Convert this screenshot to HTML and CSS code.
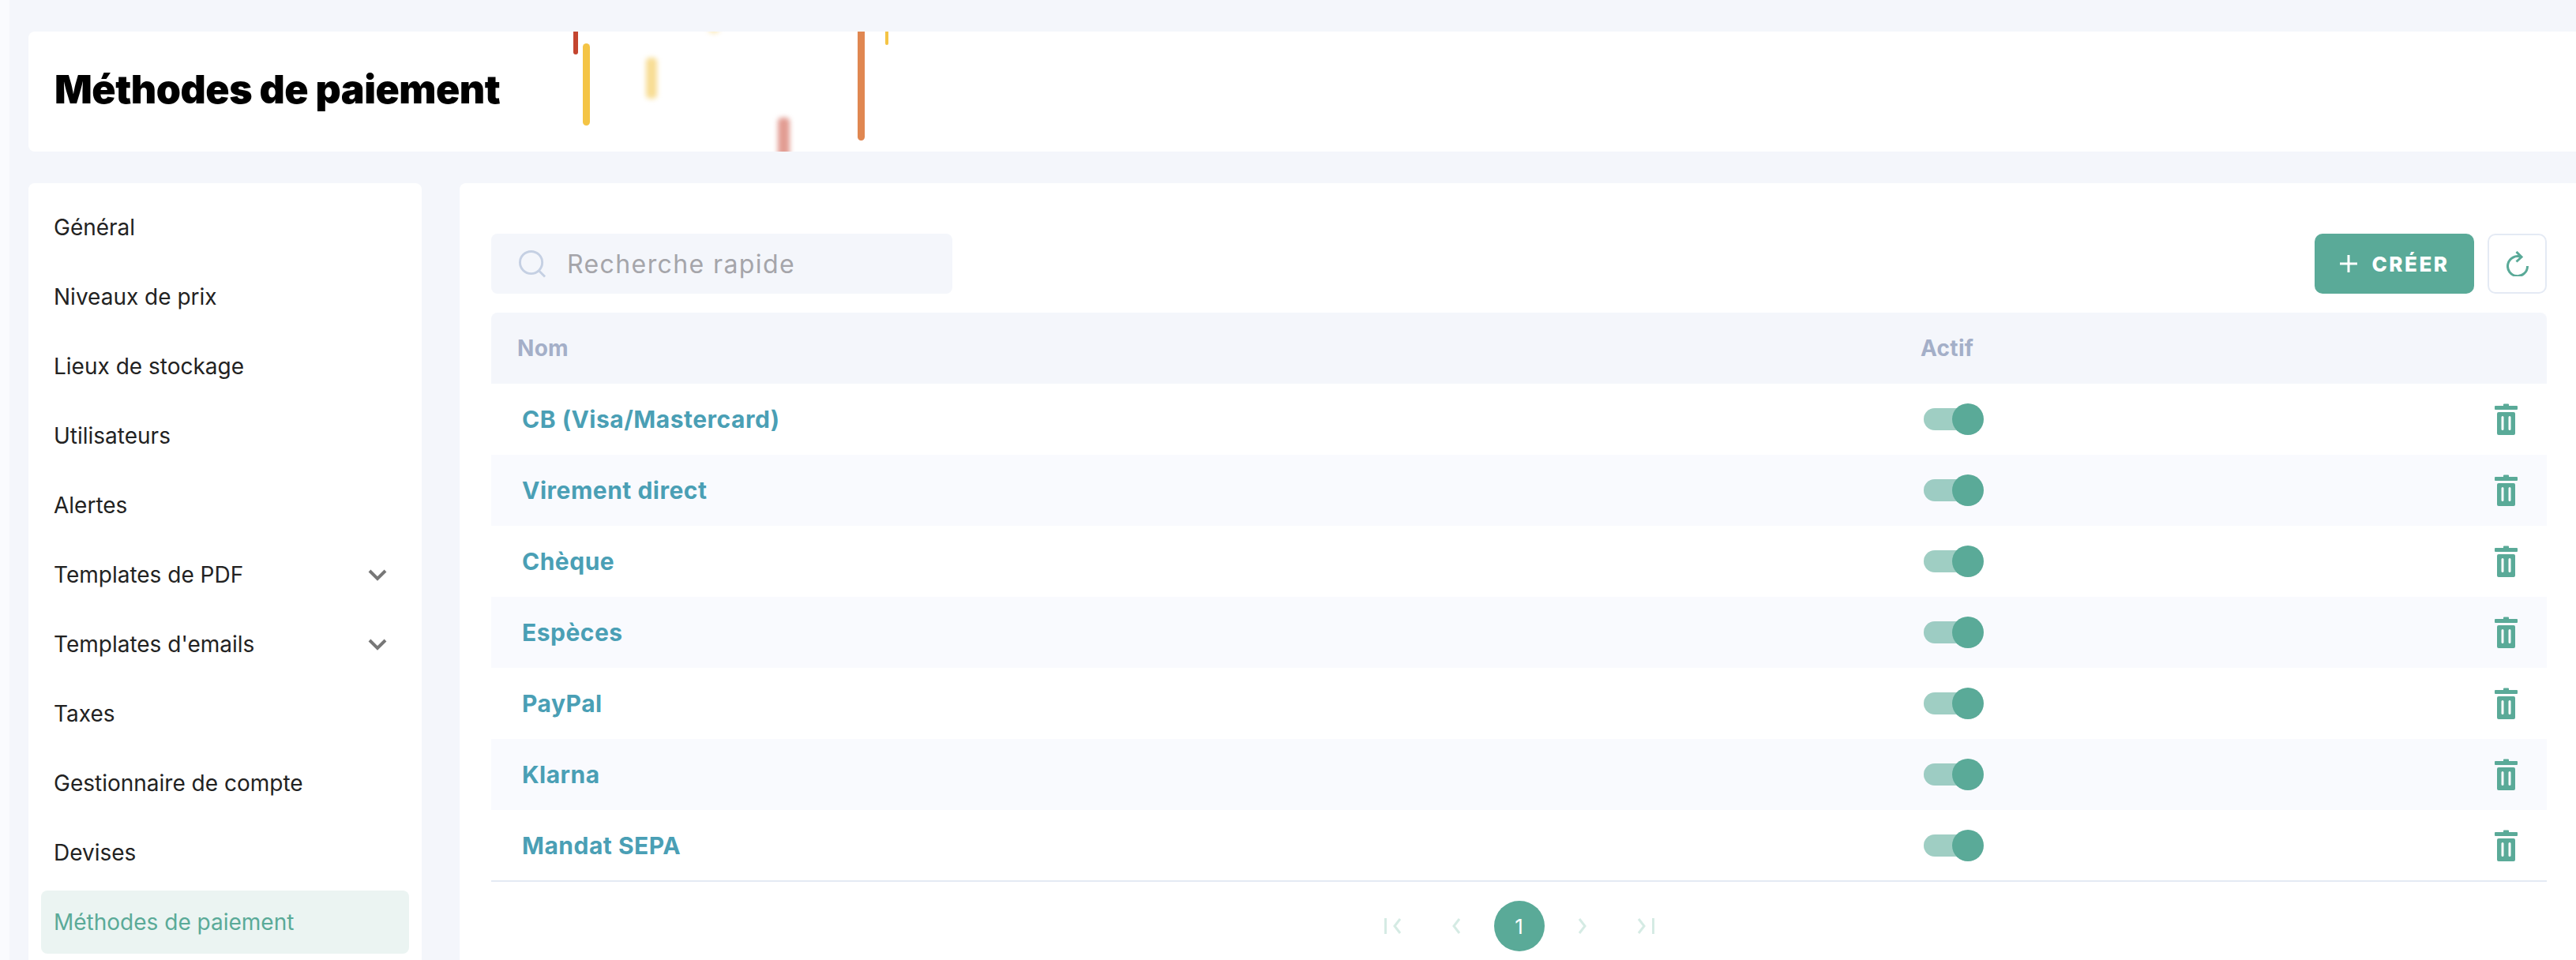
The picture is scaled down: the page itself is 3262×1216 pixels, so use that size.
FILE: index.html
```html
<!DOCTYPE html>
<html lang="fr">
    <head>
        <meta charset="utf-8">
        <title>Méthodes de paiement</title>
        <link rel="stylesheet" href="styles.css">
    </head>
    <body>
        <div class="rail"></div>
        <div class="page">
            <header class="header">
                <h1>Méthodes de paiement</h1>
                <span class="bar bar1"></span>
                <span class="bar bar2"></span>
                <span class="bar bar3"></span>
                <span class="bar bar4"></span>
                <span class="bar bar5"></span>
                <span class="bar bar6"></span>
                <span class="bar bar7"></span>
            </header>
            <div class="content">
                <nav class="side">
                    <a href="#">Général</a>
                    <a href="#">Niveaux de prix</a>
                    <a href="#">Lieux de stockage</a>
                    <a href="#">Utilisateurs</a>
                    <a href="#">Alertes</a>
                    <a href="#">Templates de PDF
                        <svg class="chev" viewBox="0 0 24 15"><path d="M2 2l10 10L22 2"/></svg>
                    </a>
                    <a href="#">Templates d'emails
                        <svg class="chev" viewBox="0 0 24 15"><path d="M2 2l10 10L22 2"/></svg>
                    </a>
                    <a href="#">Taxes</a>
                    <a href="#">Gestionnaire de compte</a>
                    <a href="#">Devises</a>
                    <a href="#" class="current">Méthodes de paiement</a>
                </nav>
                <main class="panel">
                    <div class="tools">
                        <div class="search">
                            <svg viewBox="0 0 36 36"><circle cx="16" cy="16" r="14.5"/><path d="M26.5 27l7.5 7.5"/></svg>
                            <span>Recherche rapide</span>
                        </div>
                        <div class="actions">
                            <button class="create">
                                <svg viewBox="0 0 22 22"><path d="M11 0v22M0 11h22"/></svg>
                                CRÉER
                            </button>
                            <button class="refresh">
                                <svg viewBox="0 0 28 32"><path d="M18.5 7.5A12.5 12.5 0 1 0 26.5 19"/><path d="M12.5 1l6.5 6.5-6.5 6"/></svg>
                            </button>
                        </div>
                    </div>
                    <table class="list">
                        <thead>
                            <tr>
                                <th class="c-name">Nom</th>
                                <th class="c-active">Actif</th>
                                <th class="c-del"></th>
                            </tr>
                        </thead>
                        <tbody>
                            <tr>
                                <td class="c-name"><a href="#">CB (Visa/Mastercard)</a></td>
                                <td class="c-active"><span class="switch"><i class="track"></i><i class="thumb"></i></span></td>
                                <td class="c-del"><svg class="trash" viewBox="0 0 29 40"><path d="M11 1.5a1 1 0 0 1 1-1h5a1 1 0 0 1 1 1V3h10a1 1 0 0 1 1 1v3a1 1 0 0 1-1 1H1a1 1 0 0 1-1-1V4a1 1 0 0 1 1-1h10z"/><path fill-rule="evenodd" d="M5 11h19a2 2 0 0 1 2 2v25a2 2 0 0 1-2 2H5a2 2 0 0 1-2-2V13a2 2 0 0 1 2-2zm5 5a1.5 1.5 0 0 0-1.500 1.500v15a1.500 1.500 0 0 0 3 0v-15A1.500 1.500 0 0 0 10 16zm9 0a1.500 1.500 0 0 0-1.500 1.500v15a1.500 1.500 0 0 0 3 0v-15A1.500 1.500 0 0 0 19 16z"/></svg></td>
                            </tr>
                            <tr>
                                <td class="c-name"><a href="#">Virement direct</a></td>
                                <td class="c-active"><span class="switch"><i class="track"></i><i class="thumb"></i></span></td>
                                <td class="c-del"><svg class="trash" viewBox="0 0 29 40"><path d="M11 1.5a1 1 0 0 1 1-1h5a1 1 0 0 1 1 1V3h10a1 1 0 0 1 1 1v3a1 1 0 0 1-1 1H1a1 1 0 0 1-1-1V4a1 1 0 0 1 1-1h10z"/><path fill-rule="evenodd" d="M5 11h19a2 2 0 0 1 2 2v25a2 2 0 0 1-2 2H5a2 2 0 0 1-2-2V13a2 2 0 0 1 2-2zm5 5a1.5 1.5 0 0 0-1.500 1.500v15a1.500 1.500 0 0 0 3 0v-15A1.500 1.500 0 0 0 10 16zm9 0a1.500 1.500 0 0 0-1.500 1.500v15a1.500 1.500 0 0 0 3 0v-15A1.500 1.500 0 0 0 19 16z"/></svg></td>
                            </tr>
                            <tr>
                                <td class="c-name"><a href="#">Chèque</a></td>
                                <td class="c-active"><span class="switch"><i class="track"></i><i class="thumb"></i></span></td>
                                <td class="c-del"><svg class="trash" viewBox="0 0 29 40"><path d="M11 1.5a1 1 0 0 1 1-1h5a1 1 0 0 1 1 1V3h10a1 1 0 0 1 1 1v3a1 1 0 0 1-1 1H1a1 1 0 0 1-1-1V4a1 1 0 0 1 1-1h10z"/><path fill-rule="evenodd" d="M5 11h19a2 2 0 0 1 2 2v25a2 2 0 0 1-2 2H5a2 2 0 0 1-2-2V13a2 2 0 0 1 2-2zm5 5a1.5 1.5 0 0 0-1.500 1.500v15a1.500 1.500 0 0 0 3 0v-15A1.500 1.500 0 0 0 10 16zm9 0a1.500 1.500 0 0 0-1.500 1.500v15a1.500 1.500 0 0 0 3 0v-15A1.500 1.500 0 0 0 19 16z"/></svg></td>
                            </tr>
                            <tr>
                                <td class="c-name"><a href="#">Espèces</a></td>
                                <td class="c-active"><span class="switch"><i class="track"></i><i class="thumb"></i></span></td>
                                <td class="c-del"><svg class="trash" viewBox="0 0 29 40"><path d="M11 1.5a1 1 0 0 1 1-1h5a1 1 0 0 1 1 1V3h10a1 1 0 0 1 1 1v3a1 1 0 0 1-1 1H1a1 1 0 0 1-1-1V4a1 1 0 0 1 1-1h10z"/><path fill-rule="evenodd" d="M5 11h19a2 2 0 0 1 2 2v25a2 2 0 0 1-2 2H5a2 2 0 0 1-2-2V13a2 2 0 0 1 2-2zm5 5a1.5 1.5 0 0 0-1.500 1.500v15a1.500 1.500 0 0 0 3 0v-15A1.500 1.500 0 0 0 10 16zm9 0a1.500 1.500 0 0 0-1.500 1.500v15a1.500 1.500 0 0 0 3 0v-15A1.500 1.500 0 0 0 19 16z"/></svg></td>
                            </tr>
                            <tr>
                                <td class="c-name"><a href="#">PayPal</a></td>
                                <td class="c-active"><span class="switch"><i class="track"></i><i class="thumb"></i></span></td>
                                <td class="c-del"><svg class="trash" viewBox="0 0 29 40"><path d="M11 1.5a1 1 0 0 1 1-1h5a1 1 0 0 1 1 1V3h10a1 1 0 0 1 1 1v3a1 1 0 0 1-1 1H1a1 1 0 0 1-1-1V4a1 1 0 0 1 1-1h10z"/><path fill-rule="evenodd" d="M5 11h19a2 2 0 0 1 2 2v25a2 2 0 0 1-2 2H5a2 2 0 0 1-2-2V13a2 2 0 0 1 2-2zm5 5a1.5 1.5 0 0 0-1.500 1.500v15a1.500 1.500 0 0 0 3 0v-15A1.500 1.500 0 0 0 10 16zm9 0a1.500 1.500 0 0 0-1.500 1.500v15a1.500 1.500 0 0 0 3 0v-15A1.500 1.500 0 0 0 19 16z"/></svg></td>
                            </tr>
                            <tr>
                                <td class="c-name"><a href="#">Klarna</a></td>
                                <td class="c-active"><span class="switch"><i class="track"></i><i class="thumb"></i></span></td>
                                <td class="c-del"><svg class="trash" viewBox="0 0 29 40"><path d="M11 1.5a1 1 0 0 1 1-1h5a1 1 0 0 1 1 1V3h10a1 1 0 0 1 1 1v3a1 1 0 0 1-1 1H1a1 1 0 0 1-1-1V4a1 1 0 0 1 1-1h10z"/><path fill-rule="evenodd" d="M5 11h19a2 2 0 0 1 2 2v25a2 2 0 0 1-2 2H5a2 2 0 0 1-2-2V13a2 2 0 0 1 2-2zm5 5a1.5 1.5 0 0 0-1.500 1.500v15a1.500 1.500 0 0 0 3 0v-15A1.500 1.500 0 0 0 10 16zm9 0a1.500 1.500 0 0 0-1.500 1.500v15a1.500 1.500 0 0 0 3 0v-15A1.500 1.500 0 0 0 19 16z"/></svg></td>
                            </tr>
                            <tr>
                                <td class="c-name"><a href="#">Mandat SEPA</a></td>
                                <td class="c-active"><span class="switch"><i class="track"></i><i class="thumb"></i></span></td>
                                <td class="c-del"><svg class="trash" viewBox="0 0 29 40"><path d="M11 1.5a1 1 0 0 1 1-1h5a1 1 0 0 1 1 1V3h10a1 1 0 0 1 1 1v3a1 1 0 0 1-1 1H1a1 1 0 0 1-1-1V4a1 1 0 0 1 1-1h10z"/><path fill-rule="evenodd" d="M5 11h19a2 2 0 0 1 2 2v25a2 2 0 0 1-2 2H5a2 2 0 0 1-2-2V13a2 2 0 0 1 2-2zm5 5a1.5 1.5 0 0 0-1.500 1.500v15a1.500 1.500 0 0 0 3 0v-15A1.500 1.500 0 0 0 10 16zm9 0a1.500 1.500 0 0 0-1.500 1.500v15a1.500 1.500 0 0 0 3 0v-15A1.500 1.500 0 0 0 19 16z"/></svg></td>
                            </tr>
                        </tbody>
                    </table>
                    <div class="pager">
                        <span class="step"><svg viewBox="0 0 22 20"><path d="M1.500 0v20M20 1l-7 9 7 9"/></svg></span>
                        <span class="step"><svg viewBox="0 0 22 20"><path d="M15 1l-7 9 7 9"/></svg></span>
                        <span class="now">1</span>
                        <span class="step"><svg viewBox="0 0 22 20"><path d="M7 1l7 9-7 9"/></svg></span>
                        <span class="step"><svg viewBox="0 0 22 20"><path d="M20.500 0v20M2 1l7 9-7 9"/></svg></span>
                    </div>
                </main>
            </div>
        </div>
    </body>
</html>
```

FILE: styles.css
```css
* {
    margin: 0;
    padding: 0;
    box-sizing: border-box;
}
html, body {
    height: 100%;
    overflow: hidden;
}
body {
    display: flex;
    background-color: #f4f6fb;
    font-family: "Inter", "Liberation Sans", sans-serif;
    color: #222;
}
.rail {
    width: 12px;
    flex-shrink: 0;
    background-color: #fafbfe;
}
.page {
    flex: 1;
    min-width: 0;
    padding: 40px 0 0 24px;
}

/* en-tete */
.header {
    position: relative;
    height: 152px;
    margin-bottom: 40px;
    padding: 0 0 6px 33px;
    display: flex;
    align-items: center;
    overflow: hidden;
    background-color: #fff;
    border-radius: 8px 0 0 8px;
}
.header h1 {
    font-size: 50px;
    font-weight: 900;
    letter-spacing: -0.5px;
    color: #000;
}
.bar {
    position: absolute;
    border-radius: 5px;
}
.bar1 { left: 690px; top: -10px; width: 6px; height: 39px; background: #c4452f; }
.bar2 { left: 702px; top: 15px; width: 9px; height: 104px; background: #f4c445; }
.bar3 { left: 782px; top: 33px; width: 14px; height: 52px; background: #f8dd94; filter: blur(3px); }
.bar4 { left: 861px; top: -50px; width: 14px; height: 52px; background: #fbe9b8; filter: blur(3px); }
.bar5 { left: 949px; top: 109px; width: 15px; height: 70px; background: #e29c92; filter: blur(3px); }
.bar6 { left: 1050px; top: -10px; width: 9px; height: 148px; background: #e08751; }
.bar7 { left: 1085px; top: -10px; width: 4px; height: 27px; background: #f4c445; }

.content {
    display: flex;
    gap: 48px;
    height: 984px;
}

/* menu */
.side {
    width: 498px;
    flex-shrink: 0;
    padding: 16px;
    display: flex;
    flex-direction: column;
    gap: 8px;
    background-color: #fff;
    border-radius: 8px 8px 0 0;
}
.side a {
    height: 80px;
    flex-shrink: 0;
    padding: 0 28px 0 16px;
    display: flex;
    align-items: center;
    justify-content: space-between;
    font-size: 28px;
    color: #222;
    text-decoration: none;
    border-radius: 8px;
}
.side a.current {
    background-color: #ebf4f2;
    color: #5aaa98;
}
.chev {
    width: 24px;
    height: 15px;
    fill: none;
    stroke: #777;
    stroke-width: 4;
}

/* panneau */
.panel {
    flex: 1;
    min-width: 0;
    padding: 64px 37px 0 40px;
    background-color: #fff;
    border-radius: 8px 0 0 0;
}
.tools {
    display: flex;
    justify-content: space-between;
    margin-bottom: 24px;
}
.search {
    width: 584px;
    height: 76px;
    padding-left: 35px;
    display: flex;
    align-items: center;
    gap: 26px;
    background-color: #f4f6fb;
    border-radius: 8px;
    font-size: 32px;
    letter-spacing: 1.400px;
    color: #a5a5aa;
}
.search svg {
    width: 35px;
    height: 35px;
    fill: none;
    stroke: #c5d0e3;
    stroke-width: 3;
}
.actions {
    display: flex;
    gap: 17px;
}
.actions button {
    height: 76px;
    display: flex;
    align-items: center;
    justify-content: center;
    font-family: inherit;
    border-radius: 10px;
    cursor: pointer;
}
.create {
    width: 202px;
    gap: 19px;
    border: 0;
    background-color: #5aaa98;
    color: #fff;
    font-size: 26px;
    font-weight: 800;
    letter-spacing: 2.500px;
}
.create svg {
    width: 22px;
    height: 22px;
    stroke: #fff;
    stroke-width: 3;
}
.refresh {
    width: 75px;
    background-color: #fff;
    border: 2px solid #e4eaf4;
}
.refresh svg {
    width: 28px;
    height: 32px;
    fill: none;
    stroke: #5aaa98;
    stroke-width: 3;
}

/* tableau */
.list {
    width: 100%;
    table-layout: fixed;
    border-collapse: collapse;
    border-bottom: 2px solid #e4eaf4;
}
.list th, .list td {
    height: 90px;
    text-align: left;
    vertical-align: middle;
}
.list th {
    background-color: #f4f6fb;
    font-size: 28px;
    font-weight: 700;
    letter-spacing: 0.300px;
    color: #a4afc8;
}
.list th:first-child {
    border-radius: 8px 0 0 0;
}
.list th:last-child {
    border-radius: 0 8px 0 0;
}
.list tbody tr:nth-child(even) {
    background-color: #f9fafe;
}
.list .c-name {
    width: 1810px;
}
th.c-name {
    padding-left: 33px;
}
td.c-name {
    padding-left: 39px;
}
.c-name a {
    font-size: 30px;
    font-weight: 700;
    letter-spacing: 0.500px;
    color: #4a9fb5;
    text-decoration: none;
}
.c-del {
    width: 66px;
}
.switch {
    display: flex;
    align-items: center;
    width: 76px;
    margin-left: 4px;
}
.track {
    width: 64px;
    height: 28px;
    flex-shrink: 0;
    border-radius: 14px;
    background-color: rgba(90, 170, 152, 0.58);
}
.thumb {
    width: 40px;
    height: 40px;
    flex-shrink: 0;
    margin-left: -28px;
    border-radius: 50%;
    background-color: #5aaa98;
}
.trash {
    display: block;
    width: 29px;
    height: 40px;
    fill: #5aaa98;
}

/* pagination */
.pager {
    margin-top: 24px;
    display: flex;
    justify-content: center;
    gap: 16px;
}
.step, .now {
    width: 64px;
    height: 64px;
    display: flex;
    align-items: center;
    justify-content: center;
}
.step svg {
    width: 22px;
    height: 20px;
    fill: none;
    stroke: #d5ebe4;
    stroke-width: 3;
}
.now {
    border-radius: 50%;
    background-color: #5aaa98;
    color: #fff;
    font-size: 26px;
}
```
